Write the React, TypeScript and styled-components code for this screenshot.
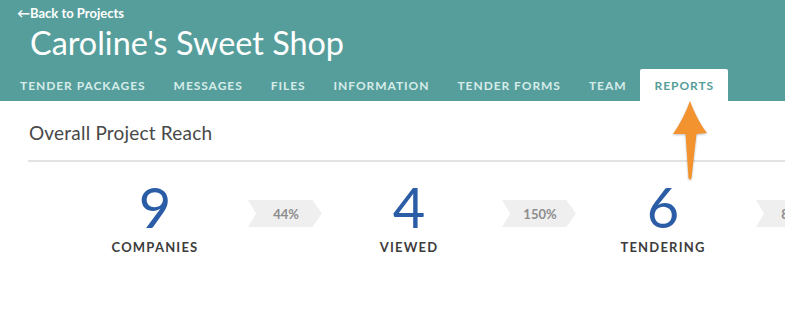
import React from "react";
import styled, { createGlobalStyle } from "styled-components";

const Global = createGlobalStyle`
  html, body { margin: 0; padding: 0; background: #fff; }
  body { font-family: Lato, "Open Sans", sans-serif; overflow: hidden; }
  * { box-sizing: border-box; }
`;

const Page = styled.div`
  position: relative;
  width: 785px;
  height: 325px;
  overflow: hidden;
`;

const Header = styled.header`
  background: #569e9b;
  height: 101px;
  display: flex;
  flex-direction: column;
`;

const BackLink = styled.a`
  display: block;
  padding: 3px 0 0 17px;
  height: 23px;
  line-height: 20px;
  font-size: 13px;
  font-weight: 700;
  color: #fff;
  text-decoration: none;
`;

const Title = styled.h1`
  margin: 0 0 0 30px;
  height: 46px;
  line-height: 40px;
  font-size: 32.4px;
  font-weight: 400;
  color: #fff;
`;

const TabBar = styled.nav`
  display: flex;
  align-items: stretch;
  height: 32px;
  padding-left: 6px;
`;

const Tab = styled.a<{ $active?: boolean }>`
  display: flex;
  align-items: center;
  padding: 0 14px;
  font-size: 12px;
  font-weight: 700;
  letter-spacing: 0.95px;
  text-transform: uppercase;
  color: ${(p) => (p.$active ? "#569e9b" : "#d6ecea")};
  background: ${(p) => (p.$active ? "#fff" : "transparent")};
  border-radius: ${(p) => (p.$active ? "2px 2px 0 0" : "0")};
`;

const Content = styled.main`
  padding: 20px 0 0 28px;
`;

const SectionTitle = styled.h2`
  margin: 0 0 0 1px;
  font-size: 19px;
  line-height: 24px;
  font-weight: 400;
  letter-spacing: 0.2px;
  color: #484848;
`;

const Divider = styled.hr`
  margin: 15px 0 0 0;
  border: 0;
  border-top: 2px solid #e2e2e2;
`;

const StatsRow = styled.div`
  display: flex;
  align-items: flex-start;
  padding: 17px 0 0 42px;
  width: 1000px;
`;

const Stat = styled.div`
  width: 170px;
  flex: none;
  display: flex;
  flex-direction: column;
  align-items: center;
`;

const StatNumber = styled.div`
  font-size: 56px;
  line-height: 56px;
  font-weight: 400;
  color: #2b5ca6;
`;

const StatLabel = styled.div`
  margin-top: 4px;
  font-size: 13px;
  font-weight: 700;
  letter-spacing: 1.2px;
  color: #3c3c3c;
`;

const Chevron = styled.div`
  flex: none;
  width: 74px;
  height: 27px;
  margin: 21px 2px 0 8px;
  display: flex;
  align-items: center;
  justify-content: center;
  padding-left: 2px;
  background: #efefef;
  clip-path: polygon(0 0, 87% 0, 100% 50%, 87% 100%, 0 100%, 11% 50%);
  font-size: 13px;
  font-weight: 700;
  color: #8c8c8c;
`;

const BottomLink = styled.a`
  display: block;
  margin: 66px 0 0 1px;
  font-size: 12px;
  font-weight: 700;
  letter-spacing: 1px;
  color: #6bb5b1;
`;

const ArrowWrap = styled.div`
  position: absolute;
  left: 666px;
  top: 98px;
  width: 48px;
  height: 88px;
  filter: drop-shadow(0 1px 1px rgba(0, 0, 0, 0.25));
`;

const Arrow = () => (
  <ArrowWrap>
    <svg width="48" height="88" viewBox="0 0 48 88">
      <path
        d="M24 3 C 28 14, 34 26, 41 35 L 30.5 36 L 25.5 80 Q 24 83 22.5 80 L 19.5 36 L 7 36 C 14 26, 20 14, 24 3 Z"
        fill="#f2932f"
      />
    </svg>
  </ArrowWrap>
);

const tabs = [
  "Tender Packages",
  "Messages",
  "Files",
  "Information",
  "Tender Forms",
  "Team",
  "Reports",
];

const stats = [
  { n: "9", label: "COMPANIES", pct: "44%" },
  { n: "4", label: "VIEWED", pct: "150%" },
  { n: "6", label: "TENDERING", pct: "83%" },
];

export default function App() {
  return (
    <Page>
      <Global />
      <Header>
        <BackLink>←Back to Projects</BackLink>
        <Title>Caroline's Sweet Shop</Title>
        <TabBar>
          {tabs.map((t) => (
            <Tab key={t} $active={t === "Reports"}>
              {t}
            </Tab>
          ))}
        </TabBar>
      </Header>
      <Content>
        <SectionTitle>Overall Project Reach</SectionTitle>
        <Divider />
        <StatsRow>
          {stats.map((s) => (
            <React.Fragment key={s.label}>
              <Stat>
                <StatNumber>{s.n}</StatNumber>
                <StatLabel>{s.label}</StatLabel>
              </Stat>
              <Chevron>{s.pct}</Chevron>
            </React.Fragment>
          ))}
        </StatsRow>
        <BottomLink>SUBMITTED BID LIST</BottomLink>
      </Content>
      <Arrow />
    </Page>
  );
}
